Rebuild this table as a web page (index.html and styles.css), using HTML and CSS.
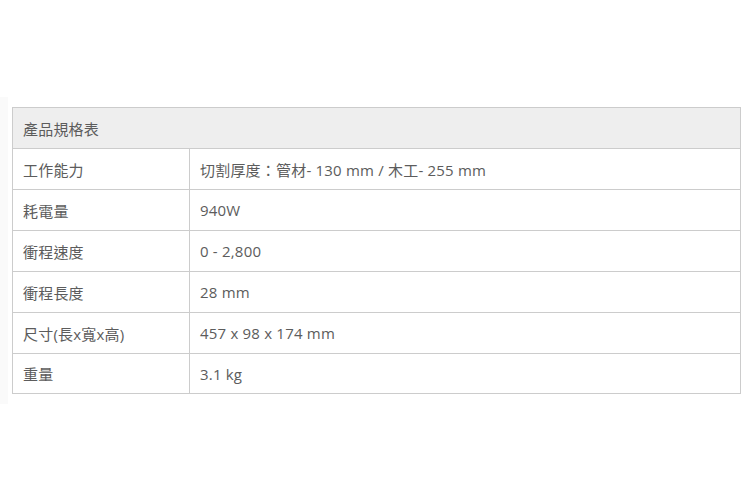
FILE: index.html
```html
<!DOCTYPE html>
<html lang="zh-Hant">
<head>
<meta charset="utf-8">
<link rel="stylesheet" href="styles.css">
</head>
<body>
<div class="wrap">
  <table class="spec">
    <colgroup>
      <col class="c1">
      <col class="c2">
    </colgroup>
    <thead>
      <tr><th colspan="2">產品規格表</th></tr>
    </thead>
    <tbody>
      <tr><td>工作能力</td><td>切割厚度：管材- 130 mm / 木工- 255 mm</td></tr>
      <tr><td>耗電量</td><td>940W</td></tr>
      <tr><td>衝程速度</td><td>0 - 2,800</td></tr>
      <tr><td>衝程長度</td><td>28 mm</td></tr>
      <tr><td>尺寸(長x寬x高)</td><td>457 x 98 x 174 mm</td></tr>
      <tr><td>重量</td><td>3.1 kg</td></tr>
    </tbody>
  </table>
</div>
</body>
</html>
```
FILE: styles.css
```css
html, body {
  margin: 0;
  padding: 0;
  background: #fff;
}
body {
  font-family: "Open Sans", "Noto Sans CJK TC", sans-serif;
  font-size: 15px;
  letter-spacing: 0.2px;
  color: #5c5c5c;
}
.wrap {
  margin-top: 97px;
  padding: 10px 0 10px 4px;
  border-left: 8px solid #fafafa;
  width: 730px;
}
.spec {
  border-collapse: collapse;
  width: 729px;
  table-layout: fixed;
}
.spec .c1 {
  width: 177px;
}
.spec th, .spec td {
  border: 1px solid #ccc;
  height: 41px;
  padding: 0 10px;
  text-align: left;
  font-weight: normal;
  box-sizing: border-box;
}
.spec tbody tr:last-child td {
  height: 40px;
}
.spec th {
  background: #eee;
}
```
